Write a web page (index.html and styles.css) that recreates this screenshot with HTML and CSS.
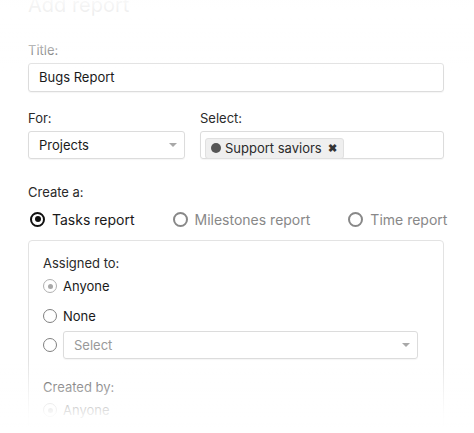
FILE: index.html
```html
<!DOCTYPE html>
<html>
<head>
<meta charset="utf-8">
<link rel="stylesheet" href="styles.css">
</head>
<body>
<div class="page">
  <h1 class="title">Add report</h1>

  <div class="field">
    <div class="label">Title:</div>
    <div class="input">Bugs Report</div>
  </div>

  <div class="row2">
    <div class="field">
      <div class="label">For:</div>
      <div class="input select">Projects<span class="caret"></span></div>
    </div>
    <div class="field">
      <div class="label">Select:</div>
      <div class="input multi"><span class="tag"><span class="dot"></span>Support saviors<span class="x">✖</span></span></div>
    </div>
  </div>

  <div class="label create">Create a:</div>
  <div class="types">
    <div class="type on"><span class="radio big checked"></span>Tasks report</div>
    <div class="type"><span class="radio big"></span>Milestones report</div>
    <div class="type"><span class="radio big"></span>Time report</div>
  </div>

  <div class="box">
    <div class="label">Assigned to:</div>
    <div class="opt"><span class="radio small dis"></span>Anyone</div>
    <div class="opt"><span class="radio small"></span>None</div>
    <div class="opt sel"><span class="radio small"></span><div class="input select ph">Select<span class="caret"></span></div></div>
    <div class="label created">Created by:</div>
    <div class="opt"><span class="radio small dis"></span>Anyone</div>
  </div>
</div>
<div class="fade-top"></div>
<div class="fade-bottom"></div>
</body>
</html>
```
FILE: styles.css
```css
html, body {
  margin: 0;
  padding: 0;
  background: #fff;
  overflow: hidden;
  height: 433px;
}
body {
  font-family: "Inter", "Liberation Sans", sans-serif;
  color: #1a1a1a;
}
.page {
  padding: 0 30px 0 28px;
}
.title {
  margin: -7px 0 0;
  font-size: 20px;
  line-height: 24px;
  font-weight: 400;
  color: #333;
}
.label {
  font-size: 13px;
  line-height: 16px;
  color: #2a2a2a;
  margin-bottom: 5px;
}
.title + .field {
  margin-top: 25px;
}
.input {
  box-sizing: border-box;
  height: 29px;
  border: 1px solid #dcdcdc;
  border-radius: 3px;
  padding: 0 10px;
  font-size: 13px;
  line-height: 27px;
  color: #1a1a1a;
  position: relative;
  box-shadow: 0 1px 1px rgba(0,0,0,0.04);
}
.row2 {
  display: grid;
  grid-template-columns: 157px 1fr;
  column-gap: 15px;
  margin-top: 18px;
}
.row2 .input {
  height: 28px;
  line-height: 26px;
}
.caret {
  position: absolute;
  right: 7px;
  top: 11px;
  width: 0;
  height: 0;
  border-left: 4px solid transparent;
  border-right: 4px solid transparent;
  border-top: 4px solid #a8a8a8;
}
.multi {
  padding: 3px 4px;
  line-height: normal;
}
.tag {
  display: inline-flex;
  align-items: center;
  box-sizing: border-box;
  height: 21px;
  padding: 0 6px 0 5px;
  background: #efefef;
  border: 1px solid #e0e0e0;
  border-radius: 3px;
  font-size: 13px;
  color: #2a2a2a;
}
.dot {
  width: 10px;
  height: 10px;
  border-radius: 50%;
  background: #555;
  margin-right: 4px;
}
.x {
  font-size: 11px;
  font-weight: 700;
  margin-left: 6px;
  color: #333;
}
.create {
  margin-top: 25px;
  margin-bottom: 9px;
}
.types {
  display: flex;
  gap: 36px;
  height: 20px;
  align-items: center;
  font-size: 14px;
  color: #888;
  white-space: nowrap;
}
.type {
  display: flex;
  align-items: center;
}
.type.on {
  color: #1a1a1a;
}
.radio {
  box-sizing: border-box;
  border-radius: 50%;
  display: inline-flex;
  align-items: center;
  justify-content: center;
  flex: none;
}
.radio.big {
  width: 15px;
  height: 15px;
  border: 2px solid #888;
  margin: 0 7px 0 2px;
}
.radio.big.checked {
  border-color: #111;
}
.radio.big.checked::after {
  content: "";
  width: 6px;
  height: 6px;
  border-radius: 50%;
  background: #111;
}
.box {
  margin-top: 11px;
  border: 1px solid #e3e3e3;
  border-radius: 4px;
  padding: 14px 25px 12px 14px;
}
.opt {
  display: flex;
  align-items: center;
  height: 20px;
  font-size: 13px;
  color: #1a1a1a;
  margin-top: 10px;
}
.box > .label + .opt {
  margin-top: 5px;
}
.radio.small {
  width: 14px;
  height: 14px;
  border: 1.5px solid #808080;
  margin-right: 6px;
}
.radio.small.dis {
  border: 1px solid #b0b0b0;
}
.radio.small.dis::after {
  content: "";
  width: 5px;
  height: 5px;
  border-radius: 50%;
  background: #a8a8a8;
}
.opt.sel {
  height: 28px;
  margin-top: 5px;
}
.opt.sel .input {
  flex: 1;
  height: 28px;
  line-height: 26px;
  color: #999;
}
.created {
  margin-top: 20px;
}
.fade-top {
  position: fixed;
  left: 0;
  right: 0;
  top: 0;
  height: 72px;
  background: linear-gradient(to bottom, rgba(255,255,255,0.97) 0%, rgba(255,255,255,0.9) 25%, rgba(255,255,255,0.65) 65%, rgba(255,255,255,0) 100%);
  pointer-events: none;
}
.fade-bottom {
  position: fixed;
  left: 0;
  right: 0;
  top: 360px;
  height: 73px;
  background: linear-gradient(to bottom, rgba(255,255,255,0) 0%, rgba(255,255,255,0.55) 40%, rgba(255,255,255,0.92) 75%, rgba(255,255,255,1) 100%);
  pointer-events: none;
}
```
